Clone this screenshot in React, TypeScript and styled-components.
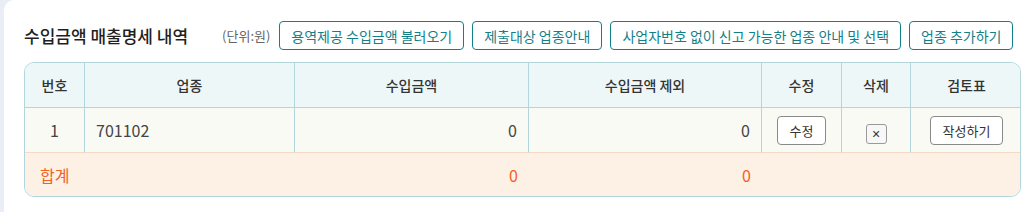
import React from "react";
import styled, { createGlobalStyle } from "styled-components";

const GlobalStyle = createGlobalStyle`
  html, body {
    margin: 0;
    padding: 0;
    background: #e9eef6;
    overflow: hidden;
  }
  body {
    font-family: "Noto Sans CJK KR", "Noto Sans", sans-serif;
  }
`;

const Page = styled.div`
  padding-left: 4px;
  height: 212px;
  overflow: hidden;
`;

const Card = styled.div`
  width: 1037px;
  min-height: 212px;
  box-sizing: border-box;
  background: #ffffff;
  border-radius: 10px 0 0 0;
  padding: 21px 20px 0 20px;
`;

const Header = styled.div`
  display: flex;
  align-items: center;
  height: 29px;
  margin-bottom: 12px;
`;

const Title = styled.h2`
  margin: 0 34px 0 0;
  font-size: 17px;
  font-weight: 500;
  color: #1f1f1f;
  white-space: nowrap;
`;

const Unit = styled.span`
  font-size: 13px;
  color: #666;
  margin-right: 9px;
  white-space: nowrap;
`;

const Actions = styled.div`
  display: flex;
  gap: 8px;
`;

const ActionButton = styled.button`
  height: 29px;
  padding: 0 11px;
  border: 1px solid #137f89;
  border-radius: 4px;
  background: #fff;
  color: #137f89;
  font-family: inherit;
  font-size: 14px;
  white-space: nowrap;
  cursor: pointer;
`;

const TableWrap = styled.div`
  width: 997px;
  box-sizing: border-box;
  border: 1px solid #b3d6dc;
  border-radius: 10px;
  overflow: hidden;
`;

const Table = styled.table`
  width: 100%;
  border-collapse: separate;
  border-spacing: 0;
  table-layout: fixed;
`;

const Th = styled.th`
  height: 44px;
  padding: 0;
  background: #edf7f7;
  border-bottom: 1px solid #b3d6dc;
  border-right: 1px solid #b3d6dc;
  font-size: 14px;
  font-weight: 500;
  color: #333;
  text-align: center;
  &:last-child {
    border-right: none;
  }
`;

const Td = styled.td<{ $align?: "left" | "right" | "center" }>`
  height: 44px;
  padding: 0 11px;
  background: #fafaf4;
  border-bottom: 1px solid #f6d9c6;
  border-right: 1px solid #b3d6dc;
  font-size: 16px;
  color: #444;
  text-align: ${(p) => p.$align || "center"};
  &:last-child {
    border-right: none;
  }
`;

const TotalCell = styled.td<{ $align?: "left" | "right" }>`
  height: 43px;
  padding: 0 11px 0 15px;
  background: #fdf0e5;
  font-size: 16px;
  color: #f2611e;
  text-align: ${(p) => p.$align || "left"};
`;

const RowButton = styled.button`
  height: 29px;
  padding: 0 12px;
  border: 1px solid #8a8a8a;
  border-radius: 4px;
  background: #fff;
  color: #333;
  font-family: inherit;
  font-size: 13px;
  cursor: pointer;
`;

const DeleteButton = styled.button`
  width: 21px;
  height: 20px;
  padding: 0;
  margin-top: 7px;
  border: 1px solid #9a9a9a;
  border-radius: 3px;
  background: #f7f7f7;
  color: #333;
  font-size: 14px;
  line-height: 16px;
  cursor: pointer;
`;

const columns = [
  { label: "번호", width: 60 },
  { label: "업종", width: 210 },
  { label: "수입금액", width: 234 },
  { label: "수입금액 제외", width: 233 },
  { label: "수정", width: 80 },
  { label: "삭제", width: 69 },
  { label: "검토표", width: 111 },
];

const rows = [{ no: 1, code: "701102", income: 0, excluded: 0 }];

const App = () => {
  const totalIncome = rows.reduce((s, r) => s + r.income, 0);
  const totalExcluded = rows.reduce((s, r) => s + r.excluded, 0);

  return (
    <Page>
      <GlobalStyle />
      <Card>
        <Header>
          <Title>수입금액 매출명세 내역</Title>
          <Unit>(단위:원)</Unit>
          <Actions>
            <ActionButton>용역제공 수입금액 불러오기</ActionButton>
            <ActionButton>제출대상 업종안내</ActionButton>
            <ActionButton>사업자번호 없이 신고 가능한 업종 안내 및 선택</ActionButton>
            <ActionButton>업종 추가하기</ActionButton>
          </Actions>
        </Header>
        <TableWrap>
          <Table>
            <colgroup>
              {columns.map((c) => (
                <col key={c.label} style={{ width: c.width }} />
              ))}
            </colgroup>
            <thead>
              <tr>
                {columns.map((c) => (
                  <Th key={c.label}>{c.label}</Th>
                ))}
              </tr>
            </thead>
            <tbody>
              {rows.map((r) => (
                <tr key={r.no}>
                  <Td>{r.no}</Td>
                  <Td $align="left">{r.code}</Td>
                  <Td $align="right">{r.income}</Td>
                  <Td $align="right">{r.excluded}</Td>
                  <Td>
                    <RowButton>수정</RowButton>
                  </Td>
                  <Td>
                    <DeleteButton>×</DeleteButton>
                  </Td>
                  <Td>
                    <RowButton>작성하기</RowButton>
                  </Td>
                </tr>
              ))}
              <tr>
                <TotalCell colSpan={2}>합계</TotalCell>
                <TotalCell $align="right">{totalIncome}</TotalCell>
                <TotalCell $align="right">{totalExcluded}</TotalCell>
                <TotalCell colSpan={3} />
              </tr>
            </tbody>
          </Table>
        </TableWrap>
      </Card>
    </Page>
  );
};

export default App;
